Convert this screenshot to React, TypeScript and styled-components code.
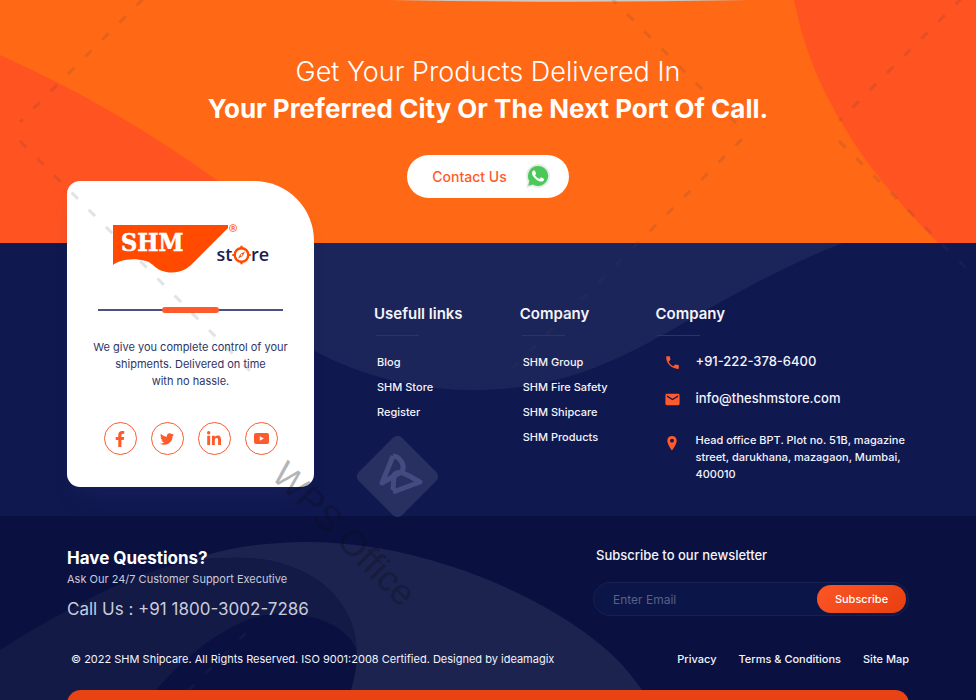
import React from "react";
import styled, { createGlobalStyle } from "styled-components";
import { FaFacebookF, FaLinkedinIn, FaTwitter } from "react-icons/fa";
import { MdEmail, MdPhone } from "react-icons/md";

const color = {
  orange: "#ff6814",
  red: "#ff5322",
  navy: "#101850",
  navyLight: "#1c2559",
  deep: "#0a1141",
  deepMid: "#131a46",
  deepLight: "#1c234f",
  accent: "#ff5a2b",
  text: "#f4f4fa",
  muted: "#c9cbdb",
};

const GlobalStyle = createGlobalStyle`
  *, *::before, *::after { box-sizing: border-box; }
  body { margin: 0; background: ${color.deep}; font-family: Inter, "Open Sans", sans-serif; }
  h2, h3, p, ul { margin: 0; padding: 0; }
  ul { list-style: none; }
  a { color: inherit; text-decoration: none; }
`;

const Page = styled.div`
  position: relative;
  overflow: hidden;
  color: ${color.text};
`;

const Section = styled.section<{ $bg: string }>`
  position: relative;
  background: ${(p) => p.$bg};
`;

const Backdrop = styled.svg`
  position: absolute;
  inset: 0;
  width: 100%;
  height: 100%;
`;

const HeroContent = styled.div`
  position: relative;
  display: flex;
  flex-direction: column;
  align-items: center;
  padding: 53px 24px 45px;
  text-align: center;
  color: #fff;
`;

const HeroTitle = styled.h2`
  font-size: 27px;
  line-height: 37px;
  font-weight: 300;
  strong { display: block; font-size: 26px; font-weight: 700; }
`;

const ContactButton = styled.button`
  display: flex;
  align-items: center;
  gap: 18px;
  margin-top: 28px;
  height: 43px;
  padding: 0 18px 0 25px;
  border: 0;
  border-radius: 22px;
  background: #fff;
  color: ${color.accent};
  font: 500 14px Inter, sans-serif;
  cursor: pointer;
`;

const MainContent = styled.div`
  position: relative;
  display: grid;
  grid-template-columns: 247px 1fr;
  column-gap: 60px;
  padding: 0 67px 29px;
`;

const Card = styled.aside`
  display: flex;
  flex-direction: column;
  align-items: center;
  margin-top: -62px;
  padding: 42px 16px 32px;
  border-radius: 13px 60px 13px 13px;
  background: #fff;
  color: #2d3567;
  box-shadow: 0 16px 20px -12px rgba(34, 42, 104, 0.5);
`;

const Divider = styled.div`
  display: flex;
  align-items: center;
  justify-content: center;
  width: 185px;
  height: 6px;
  margin-top: 31px;
  background: linear-gradient(#4a5184, #4a5184) center / 100% 2px no-repeat;
  &::after {
    content: "";
    width: 57px;
    height: 6px;
    border-radius: 3px;
    background: ${color.accent};
  }
`;

const CardText = styled.p`
  margin-top: 26px;
  font-size: 11px;
  line-height: 17px;
  text-align: center;
`;

const Socials = styled.div`
  display: flex;
  gap: 14px;
  margin-top: 32px;
`;

const SocialLink = styled.a`
  display: grid;
  place-items: center;
  width: 33px;
  height: 33px;
  border: 1px solid ${color.accent};
  border-radius: 50%;
  color: ${color.accent};
`;

const Columns = styled.div`
  display: grid;
  grid-template-columns: 146fr 136fr 254fr;
  padding-top: 60px;
`;

const ColumnTitle = styled.h3`
  font-size: 15px;
  line-height: 22px;
  font-weight: 600;
  &::after {
    content: "";
    display: block;
    width: 43px;
    height: 1px;
    margin: 10px 0 14px 2px;
    background: #2b3469;
  }
`;

const LinkList = styled.ul`
  padding-left: 3px;
  font-size: 11px;
  line-height: 25px;
  font-weight: 500;
`;

const ContactList = styled.ul`
  padding-left: 9px;
`;

const ContactRow = styled.li<{ $gap: number }>`
  display: grid;
  grid-template-columns: 14px 1fr;
  column-gap: 17px;
  margin-top: ${(p) => p.$gap}px;
  svg { color: ${color.accent}; margin-top: 4px; }
`;

const ContactText = styled.span<{ $size: number; $line: number }>`
  font-size: ${(p) => p.$size}px;
  line-height: ${(p) => p.$line}px;
  font-weight: 500;
  white-space: nowrap;
`;

const BottomContent = styled.div`
  position: relative;
  padding: 30px 67px 0;
`;

const Row = styled.div`
  display: flex;
  justify-content: space-between;
  align-items: flex-start;
`;

const QuestionTitle = styled.h3`
  font-size: 17px;
  line-height: 24px;
  color: #fff;
`;

const QuestionText = styled.p`
  font-size: 11px;
  line-height: 18px;
  color: ${color.muted};
`;

const CallText = styled.p`
  margin-top: 9px;
  font-size: 17px;
  line-height: 24px;
  color: ${color.muted};
`;

const Newsletter = styled.form`
  width: 316px;
  label {
    display: block;
    padding-left: 3px;
    font-size: 13px;
    line-height: 18px;
    font-weight: 500;
  }
`;

const Field = styled.div`
  display: flex;
  align-items: center;
  height: 34px;
  margin-top: 18px;
  padding: 0 2px 0 19px;
  border: 1px solid #18204f;
  border-radius: 17px;
  background: #0c1547;
`;

const EmailInput = styled.input`
  flex: 1;
  min-width: 0;
  padding: 0;
  border: 0;
  outline: 0;
  background: transparent;
  color: ${color.text};
  font: 400 12px Inter, sans-serif;
  &::placeholder { color: #5a6083; opacity: 1; }
`;

const SubscribeButton = styled.button`
  width: 89px;
  height: 28px;
  padding: 0;
  border: 0;
  border-radius: 14px;
  background: linear-gradient(135deg, #fb5526, #e93f10);
  color: #fff;
  font: 500 11px Inter, sans-serif;
  cursor: pointer;
`;

const Legal = styled(Row)`
  margin-top: 28px;
  padding-left: 4px;
  font-size: 11px;
  line-height: 20px;
`;

const LegalLinks = styled.nav`
  display: flex;
  gap: 22px;
  font-weight: 500;
`;

const NextPanel = styled.div`
  height: 40px;
  margin: 21px 0 -30px;
  border-radius: 14px 14px 0 0;
  background: #e84314;
`;

const Watermark = styled.svg`
  position: absolute;
  top: 0;
  left: 0;
  width: 100%;
  pointer-events: none;
  text-rendering: geometricPrecision;
`;

function WhatsAppIcon() {
  return (
    <svg width="26" height="26" viewBox="-1 0 26 26" aria-hidden="true">
      <path
        d="M20.463 3.488A11.82 11.82 0 0 0 12.05 0C5.495 0 .16 5.335.157 11.892c0 2.096.547 4.142 1.588 5.945L.057 24l6.305-1.654a11.88 11.88 0 0 0 5.683 1.448h.005c6.554 0 11.89-5.335 11.893-11.893a11.82 11.82 0 0 0-3.48-8.413z"
        fill="#e9e9e9"
      />
      <path d="M12 2a10 10 0 0 0-8.6 15.1L2.2 21.8l4.8-1.2A10 10 0 1 0 12 2z" fill="#4ac959" />
      <path
        d="M17.472 14.382c-.297-.149-1.758-.867-2.03-.967-.273-.099-.471-.148-.67.15-.197.297-.767.966-.94 1.164-.173.199-.347.223-.644.075-.297-.15-1.255-.463-2.39-1.475-.883-.788-1.48-1.761-1.653-2.059-.173-.297-.018-.458.13-.606.134-.133.298-.347.446-.52.149-.174.198-.298.298-.497.099-.198.05-.371-.025-.52-.075-.149-.669-1.612-.916-2.207-.242-.579-.487-.5-.669-.51-.173-.008-.371-.01-.57-.01-.198 0-.52.074-.792.372-.272.297-1.04 1.016-1.04 2.479 0 1.462 1.065 2.875 1.213 3.074.149.198 2.096 3.2 5.077 4.487.709.306 1.262.489 1.694.625.712.227 1.36.195 1.871.118.571-.085 1.758-.719 2.006-1.413.248-.694.248-1.289.173-1.413-.074-.124-.272-.198-.57-.347"
        fill="#fff"
      />
    </svg>
  );
}

function YoutubeIcon() {
  return (
    <svg width="15" height="11" viewBox="0 0 15 11" aria-hidden="true">
      <rect width="15" height="11" rx="2" fill="currentColor" />
      <path d="M5.8 3.2v4.6l4-2.3z" fill="#fff" />
    </svg>
  );
}

function PinIcon() {
  return (
    <svg width="16" height="15" viewBox="0 0 16 15" aria-hidden="true">
      <path
        d="M8 0C5.300 0 3.300 2 3.300 4.700C3.300 8.300 8 14.500 8 14.500S12.700 8.300 12.700 4.700C12.700 2 10.700 0 8 0ZM8 6.600a1.900 1.900 0 1 1 0-3.800a1.900 1.900 0 0 1 0 3.800Z"
        fill="currentColor"
      />
    </svg>
  );
}

function Logo() {
  return (
    <svg width="158" height="53" viewBox="0 0 158 53" role="img" aria-label="SHM store">
      <path
        d="M1 2H116V5L81 40C75 46 69 49.5 60 49.5C44 49.5 42 40 34 38C18 34 7 38 1 42Z"
        fill="#ff4a00"
      />
      <text
        x="9"
        y="27.5"
        fontFamily="'DejaVu Serif Condensed', 'DejaVu Serif', serif"
        fontWeight="700"
        fontSize="25"
        fill="#fff"
        stroke="#fff"
        strokeWidth="0.6"
      >
        SHM
      </text>
      <circle cx="121" cy="5" r="3.5" fill="none" stroke="#ff5a2b" strokeWidth="0.8" />
      <text x="119.3" y="7.2" fontFamily="Roboto, sans-serif" fontWeight="700" fontSize="6" fill="#ff5a2b">
        R
      </text>
      <text x="104.5" y="38" fontFamily="'Open Sans', sans-serif" fontWeight="600" fontSize="18" fill="#1b2150">
        st
      </text>
      <g fill="none" stroke="#ff4a00">
        <circle cx="129.5" cy="32" r="6.8" strokeWidth="2.4" />
        <path d="M129.5 22.8v3M129.5 38.2v3M120.3 32h3M135.7 32h3" strokeWidth="2.2" />
      </g>
      <path d="M133 28.5l-2.400 4.600-4.600 2.400 2.400-4.600z" fill="#ff4a00" />
      <circle cx="129.5" cy="32" r="0.9" fill="#fff" />
      <text x="139" y="38" fontFamily="'Open Sans', sans-serif" fontWeight="600" fontSize="18" fill="#1b2150">
        re
      </text>
    </svg>
  );
}

const dashedLines = [
  "M143 -1L20 122",
  "M20 141L250 371",
  "M610 -3L736 123",
  "M742 139L510 371",
  "M962 -2L839 121",
  "M839 141L980 282",
  "M246 633L176 703",
];

const usefulLinks = ["Blog", "SHM Store", "Register"];
const companyLinks = ["SHM Group", "SHM Fire Safety", "SHM Shipcare", "SHM Products"];
const legalLinks = ["Privacy", "Terms & Conditions", "Site Map"];

function LinkColumn({ title, links }: { title: string; links: string[] }) {
  return (
    <nav aria-label={title}>
      <ColumnTitle>{title}</ColumnTitle>
      <LinkList>
        {links.map((l) => (
          <li key={l}>
            <a href="#">{l}</a>
          </li>
        ))}
      </LinkList>
    </nav>
  );
}

export default function App() {
  return (
    <>
      <GlobalStyle />
      <Page>
        <Section $bg={color.orange}>
          <Backdrop viewBox="0 0 976 243" preserveAspectRatio="none" aria-hidden="true">
            <path d="M0 55C78 90 150 132 218 181Q252 208 285 243H0Z" fill={color.red} />
            <path d="M794 0C806 60 828 100 842 123C862 158 885 188 938 243H976V0Z" fill={color.red} />
            <path d="M390 0Q570 3.500 750 0Z" fill="#cfc9c0" />
          </Backdrop>
          <HeroContent>
            <HeroTitle>
              Get Your Products Delivered In <strong>Your Preferred City Or The Next Port Of Call.</strong>
            </HeroTitle>
            <ContactButton type="button">
              Contact Us
              <WhatsAppIcon />
            </ContactButton>
          </HeroContent>
        </Section>

        <Section $bg={color.navy}>
          <Backdrop viewBox="0 0 976 273" preserveAspectRatio="none" aria-hidden="true">
            <path d="M180 0C250 75 340 147 473 147C550 147 600 125 650 99C700 72 765 30 843 0Z" fill={color.navyLight} />
          </Backdrop>
          <MainContent>
            <Card>
              <Logo />
              <Divider />
              <CardText>
                We give you complete control of your
                <br />
                shipments. Delivered on time
                <br />
                with no hassle.
              </CardText>
              <Socials>
                <SocialLink href="#" aria-label="Facebook"><FaFacebookF size={16} /></SocialLink>
                <SocialLink href="#" aria-label="Twitter"><FaTwitter size={14} /></SocialLink>
                <SocialLink href="#" aria-label="LinkedIn"><FaLinkedinIn size={16} /></SocialLink>
                <SocialLink href="#" aria-label="YouTube"><YoutubeIcon /></SocialLink>
              </Socials>
            </Card>
            <Columns>
              <LinkColumn title="Usefull links" links={usefulLinks} />
              <LinkColumn title="Company" links={companyLinks} />
              <div>
                <ColumnTitle>Company</ColumnTitle>
                <ContactList>
                  <ContactRow $gap={0}>
                    <MdPhone size={17} />
                    <ContactText as="a" href="tel:+912223786400" $size={13} $line={22}>+91-222-378-6400</ContactText>
                  </ContactRow>
                  <ContactRow $gap={15}>
                    <MdEmail size={17} />
                    <ContactText as="a" href="mailto:info@theshmstore.com" $size={13} $line={22}>info@theshmstore.com</ContactText>
                  </ContactRow>
                  <ContactRow $gap={23}>
                    <PinIcon />
                    <ContactText $size={11} $line={17}>
                      Head office BPT. Plot no. 51B, magazine
                      <br />
                      street, darukhana, mazagaon, Mumbai,
                      <br />
                      400010
                    </ContactText>
                  </ContactRow>
                </ContactList>
              </div>
            </Columns>
          </MainContent>
        </Section>

        <Section $bg={color.deep}>
          <Backdrop viewBox="0 0 976 184" preserveAspectRatio="none" aria-hidden="true">
            <path d="M0 115C70 78 130 50 187 39C200 37 220 36 240 36C310 36 357 72 357 118C352 92 290 72 240 92C195 110 150 150 128 184H0Z" fill={color.deepMid} />
            <path d="M187 39C255 18 350 14 450 43C520 62 590 97 622 128C644 149 655 167 664 184H334C349 160 357 137 357 118C357 72 310 36 240 36C220 36 200 37 187 39Z" fill={color.deepLight} />
          </Backdrop>
          <BottomContent>
            <Row>
              <div>
                <QuestionTitle>Have Questions?</QuestionTitle>
                <QuestionText>Ask Our 24/7 Customer Support Executive</QuestionText>
                <CallText>Call Us : +91 1800-3002-7286</CallText>
              </div>
              <Newsletter onSubmit={(e) => e.preventDefault()}>
                <label htmlFor="email">Subscribe to our newsletter</label>
                <Field>
                  <EmailInput id="email" type="email" placeholder="Enter Email" />
                  <SubscribeButton type="submit">Subscribe</SubscribeButton>
                </Field>
              </Newsletter>
            </Row>
            <Legal>
              <p>© 2022 SHM Shipcare. All Rights Reserved. ISO 9001:2008 Certified. Designed by ideamagix</p>
              <LegalLinks aria-label="Legal">
                {legalLinks.map((l) => (
                  <a key={l} href="#">{l}</a>
                ))}
              </LegalLinks>
            </Legal>
            <NextPanel />
          </BottomContent>
        </Section>

        <Watermark viewBox="0 0 976 700" aria-hidden="true">
          <g stroke="#404050" strokeOpacity="0.15" strokeWidth="3" strokeDasharray="9 15.300" fill="none">
            {dashedLines.map((d) => (
              <path key={d} d={d} />
            ))}
          </g>
          <rect x="367" y="446" width="61" height="61" rx="6" transform="rotate(45 397.500 476.500)" fill="#fff" fillOpacity="0.1" />
          <path
            d="M393 456L382 483L401 472C407 466 399 456 393 456M393 490L394 475C399 468 410 477 420 482L393 492"
            fill="none"
            stroke="#8088c8"
            strokeOpacity="0.32"
            strokeWidth="5"
            strokeLinejoin="round"
          />
          <text
            transform="translate(270 477) rotate(45)"
            fontFamily="'Liberation Sans', sans-serif"
            fontSize="36"
            fill="#0c0c14"
            opacity="0.3"
          >
            WPS Office
          </text>
        </Watermark>
      </Page>
    </>
  );
}
